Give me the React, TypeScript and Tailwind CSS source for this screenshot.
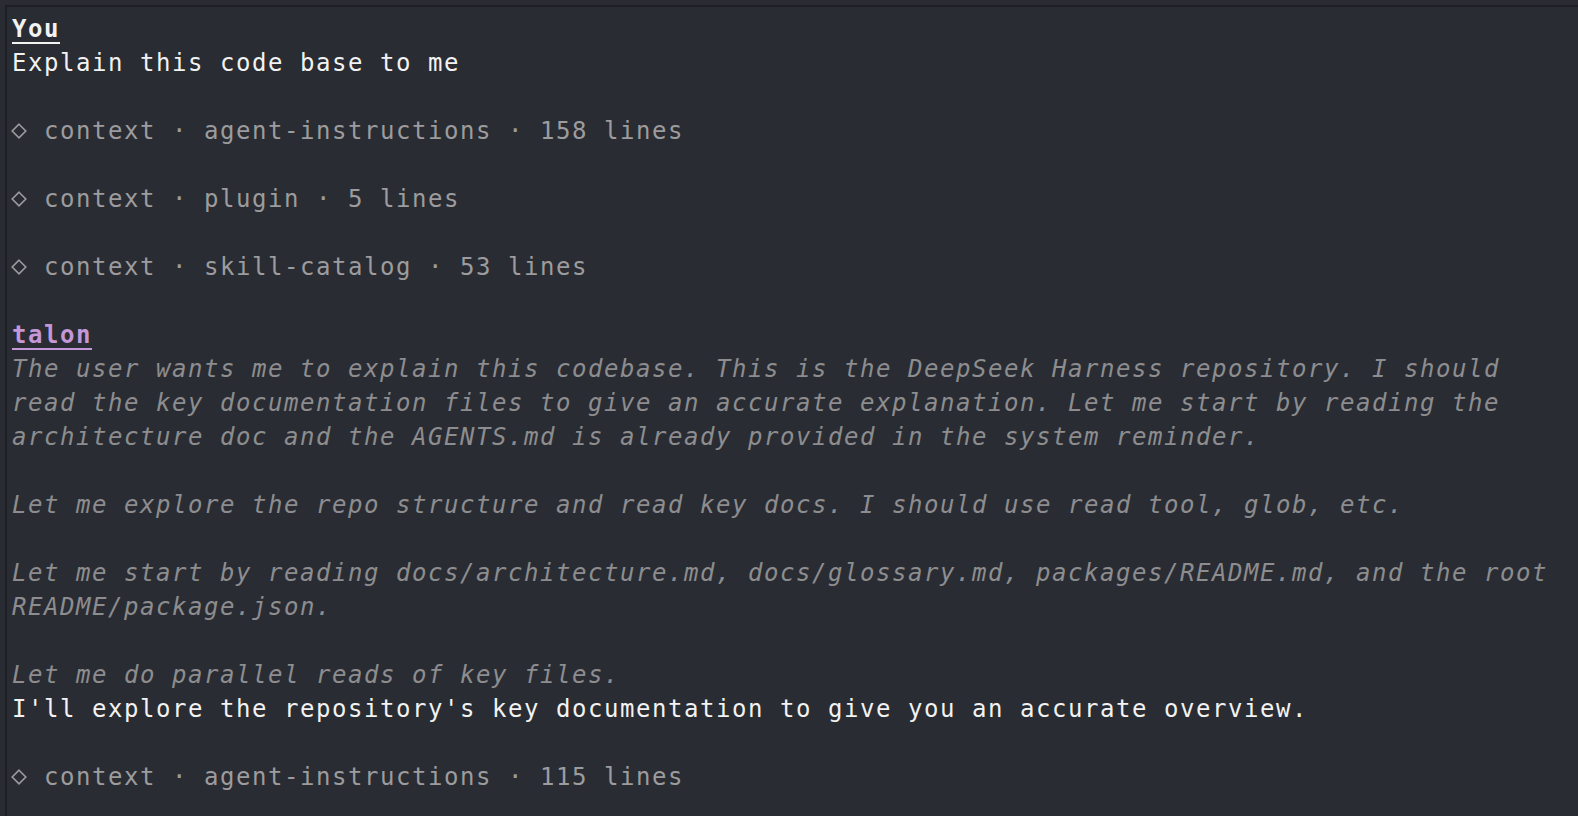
import React from "react"

type Line =
  | { kind: "blank" }
  | { kind: "speaker"; text: string; tone: "user" | "agent" }
  | { kind: "text"; text: string }
  | { kind: "thinking"; text: string }
  | { kind: "context"; text: string }

const lines: Line[] = [
  { kind: "speaker", text: "You", tone: "user" },
  { kind: "text", text: "Explain this code base to me" },
  { kind: "blank" },
  { kind: "context", text: "context · agent-instructions · 158 lines" },
  { kind: "blank" },
  { kind: "context", text: "context · plugin · 5 lines" },
  { kind: "blank" },
  { kind: "context", text: "context · skill-catalog · 53 lines" },
  { kind: "blank" },
  { kind: "speaker", text: "talon", tone: "agent" },
  { kind: "thinking", text: "The user wants me to explain this codebase. This is the DeepSeek Harness repository. I should" },
  { kind: "thinking", text: "read the key documentation files to give an accurate explanation. Let me start by reading the" },
  { kind: "thinking", text: "architecture doc and the AGENTS.md is already provided in the system reminder." },
  { kind: "blank" },
  { kind: "thinking", text: "Let me explore the repo structure and read key docs. I should use read tool, glob, etc." },
  { kind: "blank" },
  { kind: "thinking", text: "Let me start by reading docs/architecture.md, docs/glossary.md, packages/README.md, and the root" },
  { kind: "thinking", text: "README/package.json." },
  { kind: "blank" },
  { kind: "thinking", text: "Let me do parallel reads of key files." },
  { kind: "text", text: "I'll explore the repository's key documentation to give you an accurate overview." },
  { kind: "blank" },
  { kind: "context", text: "context · agent-instructions · 115 lines" },
]

function Diamond() {
  return (
    <span className="flex w-[32px] items-center">
      <svg width="16" height="16" viewBox="0 0 16 16" className="-ml-[1px]">
        <polygon points="8,1.2 14.8,8 8,14.8 1.2,8" fill="none" stroke="currentColor" strokeWidth="1.6" />
      </svg>
    </span>
  )
}

function Row({ line }: { line: Line }) {
  switch (line.kind) {
    case "blank":
      return <div className="h-[34px]" />
    case "speaker":
      return (
        <div className="h-[34px]">
          <span
            className={
              line.tone === "user"
                ? "font-bold text-[#f2f2f2] underline decoration-2 underline-offset-[5px]"
                : "font-bold text-[#c497d8] underline decoration-2 underline-offset-[5px]"
            }
          >
            {line.text}
          </span>
        </div>
      )
    case "text":
      return <div className="h-[34px] text-[#f2f2f2]">{line.text}</div>
    case "thinking":
      return <div className="h-[34px] italic text-[#8d8d8f]">{line.text}</div>
    case "context":
      return (
        <div className="flex h-[34px] text-[#9c9c9e]">
          <Diamond />
          <span>{line.text}</span>
        </div>
      )
  }
}

export default function App() {
  return (
    <div className="h-screen w-full overflow-hidden bg-[#2a2c33] pl-[5px] pt-[5px]">
      <div
        className="h-full border-l-2 border-t-2 border-[#1d1f24] pl-[5px] pt-[5px] whitespace-pre text-[24px] leading-[34px] tracking-[1.55px]"
        style={{ fontFamily: '"DejaVu Sans Mono", "Liberation Mono", monospace' }}
      >
        {lines.map((line, i) => (
          <Row key={i} line={line} />
        ))}
      </div>
    </div>
  )
}
